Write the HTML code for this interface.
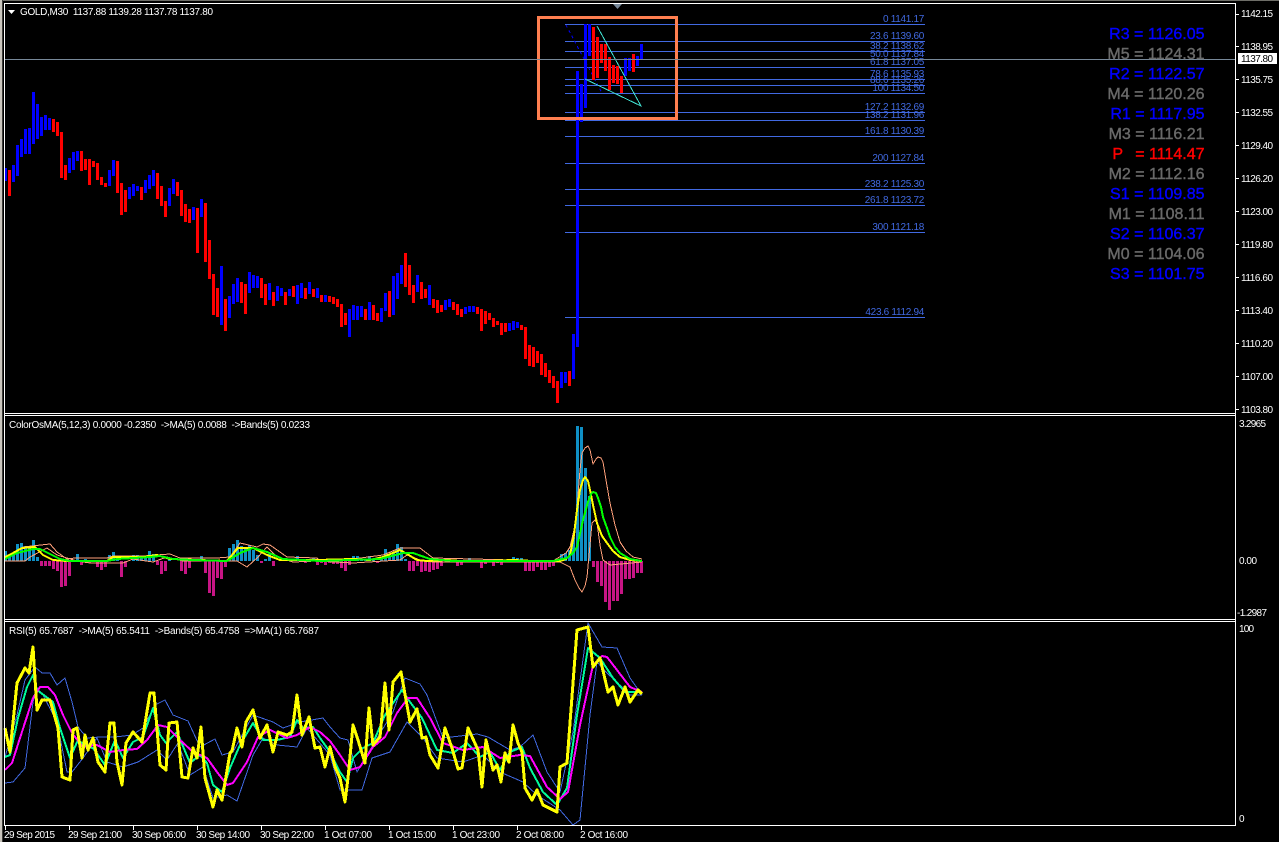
<!DOCTYPE html>
<html><head><meta charset="utf-8"><title>GOLD,M30</title>
<style>
html,body{margin:0;padding:0;background:#000;width:1279px;height:842px;overflow:hidden}
svg{display:block}
text{font-family:"Liberation Sans",sans-serif;font-size:10px;fill:#fff;white-space:pre}
.f{fill:#4169e1;text-anchor:end;letter-spacing:-.3px}
.p{font-size:16px;text-anchor:end;stroke-width:.4px}
.b{fill:#00f;stroke:#00f}.g{fill:#696969;stroke:#696969}.r{fill:#f00;stroke:#f00}
polyline{fill:none;shape-rendering:crispEdges;stroke-linejoin:round}
path{fill:none;shape-rendering:crispEdges}
</style></head><body>
<svg width="1279" height="842" viewBox="0 0 1279 842" xmlns="http://www.w3.org/2000/svg">
<rect width="1279" height="842" fill="#000"/>
<!-- window edge -->
<path d="M0 .5H1279" stroke="#6e6e68" stroke-width="1"/>
<path d="M1 0V842" stroke="#c8c4bc" stroke-width="2"/>
<path d="M2.5 0V842" stroke="#3c3c38" stroke-width="1"/>

<!-- fibo lines -->
<path d="M565 24.5H925M565 41.5H925M565 51.5H925M565 67.5H925M565 79.5H925M565 85.5H925M565 93.5H925M565 112.5H925M565 120.5H925M565 136.5H925M565 163.5H925M565 189.5H925M565 205.5H925M565 232.5H925M565 317.5H925" stroke="#4169e1" stroke-width="1"/>
<path d="M566 25L602 93" stroke="#0000ee" stroke-width="1" stroke-dasharray="3 3"/>
<text class="f" x="924" y="22">0 1141.17</text>
<text class="f" x="924" y="39">23.6 1139.60</text>
<text class="f" x="924" y="49">38.2 1138.62</text>
<text class="f" x="924" y="57">50.0 1137.84</text>
<text class="f" x="924" y="65">61.8 1137.05</text>
<text class="f" x="924" y="77">78.6 1135.93</text>
<text class="f" x="924" y="83">88.6 1135.26</text>
<text class="f" x="924" y="91">100 1134.50</text>
<text class="f" x="924" y="110">127.2 1132.69</text>
<text class="f" x="924" y="118">138.2 1131.96</text>
<text class="f" x="924" y="134">161.8 1130.39</text>
<text class="f" x="924" y="161">200 1127.84</text>
<text class="f" x="924" y="187">238.2 1125.30</text>
<text class="f" x="924" y="203">261.8 1123.72</text>
<text class="f" x="924" y="230">300 1121.18</text>
<text class="f" x="924" y="315">423.6 1112.94</text>

<!-- bars blue -->
<path stroke="#00f" stroke-width="3" d="M5.5 168V181M13.5 165V182M17.5 145V176M21.5 139V157M25.5 129V154M29.5 128V154M33.5 92V144M37.5 104V139M41.5 117V136M45.5 115V130M49.5 118V130M69.5 158V173M73.5 152V170M77.5 151V161M109.5 170V186M113.5 160V176M129.5 187V199M133.5 184V196M137.5 186V191M145.5 180V193M149.5 175V189M153.5 170V186M169.5 188V206M173.5 179V194M193.5 207V220M201.5 199V217M221.5 266V325M229.5 296V318M233.5 284V304M237.5 278V302M249.5 272V293M253.5 275V288M257.5 276V288M269.5 283V300M277.5 286V301M281.5 288V296M289.5 289V296M297.5 285V304M301.5 283V298M309.5 282V294M317.5 288V298M325.5 295V302M349.5 309V337M353.5 305V320M357.5 306V320M361.5 306V317M369.5 302V320M381.5 308V322M385.5 293V311M393.5 276V315M397.5 273V299M401.5 265V284M417.5 275V292M429.5 285V305M445.5 300V310M449.5 299V307M465.5 307V314M469.5 306V312M473.5 306V312M509.5 323V331M513.5 321V330M517.5 322V328M561.5 372V388M565.5 372V383M573.5 334V379M577.5 71V347M581.5 84V122M585.5 24V108M589.5 24V56M625.5 58V76M629.5 58V71M637.5 56V66M641.5 44V60"/>
<!-- bars red -->
<path stroke="#f00" stroke-width="3" d="M9.5 170V196M53.5 119V132M57.5 122V136M61.5 132V178M65.5 165V180M81.5 151V171M85.5 159V170M89.5 159V185M93.5 161V167M97.5 163V180M101.5 177V185M105.5 183V187M117.5 161V193M121.5 183V215M125.5 190V212M141.5 187V200M157.5 173V199M161.5 186V206M165.5 201V217M177.5 182V196M181.5 190V216M185.5 204V222M189.5 209V223M197.5 208V253M205.5 203V262M209.5 240V279M213.5 274V315M217.5 288V317M225.5 299V331M241.5 282V303M245.5 284V314M261.5 278V298M265.5 284V305M273.5 292V306M285.5 292V305M293.5 286V297M305.5 288V299M313.5 289V297M321.5 295V302M329.5 296V302M333.5 297V304M337.5 299V307M341.5 304V327M345.5 313V325M365.5 309V320M373.5 305V320M377.5 313V321M389.5 291V317M405.5 253V287M409.5 265V295M413.5 285V303M421.5 282V299M425.5 289V298M433.5 299V308M437.5 300V313M441.5 305V312M453.5 302V310M457.5 304V315M461.5 309V317M477.5 307V314M481.5 309V331M485.5 311V324M489.5 313V320M493.5 318V327M497.5 321V325M501.5 323V335M505.5 323V332M521.5 325V330M525.5 327V359M529.5 345V366M533.5 347V367M537.5 351V363M541.5 354V375M545.5 363V377M549.5 370V383M553.5 376V388M557.5 381V403M569.5 371V386M593.5 27V80M597.5 37V78M601.5 44V63M605.5 44V71M609.5 57V90M613.5 65V83M617.5 66V84M621.5 76V93M633.5 54V72"/>
<path d="M597 26L641 106L585 79" stroke="#40e0d0" stroke-width="1"/>
<rect x="538.5" y="17.5" width="138" height="101" fill="none" stroke="#ff7f50" stroke-width="3"/>
<polygon points="613,4 622,4 617.5,9" fill="#778899"/>

<!-- current price line -->
<path d="M5 59.5H1235" stroke="#778899" stroke-width="1"/>

<!-- pivots -->
<text class="p b" x="1204.5" y="39">R3 = 1126.05</text>
<text class="p g" x="1204.5" y="59">M5 = 1124.31</text>
<text class="p b" x="1204.5" y="79">R2 = 1122.57</text>
<text class="p g" x="1204.5" y="99">M4 = 1120.26</text>
<text class="p b" x="1204.5" y="119">R1 = 1117.95</text>
<text class="p g" x="1204.5" y="139">M3 = 1116.21</text>
<text class="p r" x="1123" y="159">P</text><text class="p r" x="1204.5" y="159">= 1114.47</text>
<text class="p g" x="1204.5" y="179">M2 = 1112.16</text>
<text class="p b" x="1204.5" y="199">S1 = 1109.85</text>
<text class="p g" x="1204.5" y="219">M1 = 1108.11</text>
<text class="p b" x="1204.5" y="239">S2 = 1106.37</text>
<text class="p g" x="1204.5" y="259">M0 = 1104.06</text>
<text class="p b" x="1204.5" y="279">S3 = 1101.75</text>

<!-- OsMA histogram -->
<path stroke="#0f8fc5" stroke-width="3" d="M5.5 551V561M9.5 555V561M13.5 555V561M17.5 544V561M21.5 543V561M25.5 546V561M29.5 547V561M33.5 540V561M37.5 557V561M77.5 554V561M85.5 559V561M109.5 555V561M113.5 552V561M117.5 557V561M133.5 555V561M137.5 555V561M141.5 557V561M145.5 557V561M149.5 551V561M153.5 554V561M169.5 559V561M201.5 556V561M229.5 548V561M233.5 544V561M237.5 540V561M241.5 546V561M245.5 547V561M249.5 545V561M253.5 550V561M257.5 555V561M265.5 559V561M269.5 554V561M281.5 559V561M289.5 559V561M293.5 559V561M297.5 556V561M313.5 558V561M353.5 556V561M357.5 556V561M361.5 559V561M365.5 559V561M369.5 556V561M373.5 559V561M381.5 557V561M385.5 549V561M389.5 556V561M393.5 552V561M397.5 544V561M401.5 547V561M405.5 559V561M445.5 559V561M469.5 558V561M513.5 557V561M517.5 558V561M521.5 558V561M561.5 554V561M565.5 553V561M569.5 550V561M573.5 537V561M577.5 426V561M581.5 427V561M585.5 468V561M589.5 496V561"/>
<path stroke="#c71585" stroke-width="3" d="M41.5 561V566M45.5 561V566M49.5 561V566M53.5 561V569M57.5 561V571M61.5 561V587M65.5 561V586M69.5 561V576M81.5 561V565M89.5 561V563M97.5 561V567M101.5 561V570M105.5 561V567M121.5 561V577M125.5 561V567M157.5 561V565M161.5 561V574M165.5 561V571M181.5 561V571M185.5 561V574M189.5 561V568M205.5 561V573M209.5 561V593M213.5 561V596M217.5 561V578M221.5 561V579M225.5 561V567M261.5 561V563M273.5 561V566M305.5 561V563M317.5 561V565M321.5 561V563M325.5 561V565M329.5 561V563M333.5 561V564M337.5 561V564M341.5 561V568M345.5 561V571M349.5 561V565M377.5 561V563M409.5 561V571M413.5 561V571M417.5 561V566M421.5 561V572M425.5 561V571M429.5 561V572M433.5 561V570M437.5 561V569M441.5 561V566M457.5 561V566M461.5 561V565M481.5 561V568M485.5 561V564M493.5 561V566M497.5 561V563M501.5 561V565M525.5 561V571M529.5 561V571M533.5 561V571M537.5 561V567M541.5 561V570M545.5 561V570M549.5 561V567M553.5 561V566M593.5 561V567M597.5 561V582M601.5 561V586M605.5 561V602M609.5 561V610M613.5 561V601M617.5 561V601M621.5 561V594M625.5 561V579M629.5 561V579M633.5 561V578M637.5 561V573M641.5 561V573"/>
<!-- OsMA lines -->
<polyline stroke="#ffa07a" stroke-width="1" points="5,558 13,553 23,547 50,544 57,552 67,559 75,558 107,558 113,556 143,556 170,554 180,558 217,558 230,557 240,543 257,547 263,544 270,545 287,557 317,558 320,561 353,559 383,555 400,548 420,548 433,558 553,561 566,553 570,547 574,530 577,507 580,470 582,453 585,448 588,446 590,450 593,464 596,459 598,457 601,458 603,462 606,480 610,503 615,525 620,542 626,551 633,557 642,559"/>
<polyline stroke="#ffa07a" stroke-width="1" points="5,561 25,561 30,557 47,548 57,555 77,561 90,563 123,563 133,559 153,562 167,557 183,561 237,561 247,567 258,557 267,547 277,557 293,562 317,561 353,563 400,560 407,555 420,560 433,562 560,562 570,567 575,580 579,588 582,592 585,586 587,577 590,545 592,523 595,520 597,523 600,545 603,560 610,565 642,562"/>
<polyline stroke="#ff0" stroke-width="2" points="5,557 13,553 22,548 35,547 43,555 53,560 67,561 107,561 113,557 143,557 157,555 170,559 227,561 238,548 253,548 267,555 280,560 317,560 353,559 370,560 383,557 400,550 407,554 417,560 427,561 447,560 460,561 487,561 513,560 533,561 560,561 566,559 570,555 574,535 577,510 580,490 583,480 585,477 588,481 590,490 593,505 597,523 602,536 607,543 613,551 620,557 630,560 642,561"/>
<polyline stroke="#0f0" stroke-width="2" points="5,559 17,553 33,549 40,549 60,559 70,561 107,561 117,559 150,557 160,556 173,559 193,560 227,561 240,553 253,548 267,552 283,559 320,561 380,559 403,553 413,553 430,559 453,561 553,561 567,558 573,553 577,547 583,520 588,502 591,494 593,492 596,493 598,498 601,507 603,517 607,528 610,537 615,547 620,553 630,559 642,561"/>

<!-- RSI lines -->
<polyline stroke="#4169e1" stroke-width="1" points="5,757 17,715 25,680 35,667 42,673 50,673 57,685 65,678 72,702 78,727 87,738 100,737 115,737 132,735 143,728 155,705 165,700 173,715 188,721 200,747 215,739 222,755 233,752 253,715 273,722 283,728 300,722 323,718 330,727 340,738 348,740 357,772 373,745 393,712 405,678 420,684 427,695 443,738 477,734 488,737 510,750 520,747 533,735 547,772 560,792 573,732 588,623 602,647 617,648 630,678 642,695"/>
<polyline stroke="#4169e1" stroke-width="1" points="5,783 13,782 25,768 33,702 37,688 43,695 57,722 67,772 72,772 83,758 97,738 107,762 123,767 138,762 157,750 167,760 178,743 190,775 203,767 213,798 227,795 237,801 253,755 263,738 277,745 297,747 307,728 330,755 340,790 350,790 362,790 372,758 390,752 407,722 423,738 437,758 463,762 483,755 500,772 523,782 537,795 560,810 573,825 580,820 590,715 597,662 607,673 623,688 630,695 642,695"/>
<polyline stroke="#00fa9a" stroke-width="2" points="5,757 10,755 18,718 27,687 33,675 37,690 53,702 60,728 70,758 78,740 87,747 93,748 105,765 115,740 123,758 133,742 143,737 153,708 160,735 166,743 177,732 190,763 200,755 207,763 213,785 222,792 230,768 240,745 253,723 263,740 277,740 290,737 297,720 303,728 313,727 320,738 330,752 340,772 347,782 353,758 363,748 373,743 385,715 402,690 410,702 422,718 437,750 453,753 467,743 480,757 490,752 500,770 510,752 522,747 530,768 543,792 557,805 567,788 577,715 588,648 600,658 613,678 625,692 642,692"/>
<polyline stroke="#f0f" stroke-width="2" points="5,770 12,763 20,738 33,698 40,687 48,687 55,695 63,715 72,733 83,747 97,745 110,752 123,750 137,749 147,740 158,725 167,727 180,740 193,752 207,758 217,772 227,785 233,783 247,762 258,737 270,730 287,738 297,735 310,727 320,732 330,741 340,755 350,770 360,767 373,747 385,737 397,713 408,698 417,698 430,718 443,743 463,750 483,747 500,758 520,755 530,756 547,787 560,799 568,792 580,725 593,665 602,656 607,657 617,670 630,687 642,692"/>
<polyline stroke="#ff0" stroke-width="3" points="5,728 10,752 17,683 25,668 29,673 33,647 37,710 42,700 50,700 58,728 62,777 70,780 73,730 77,728 82,758 85,735 88,750 93,738 98,762 105,772 110,723 114,723 117,762 122,785 126,743 133,732 142,742 150,693 154,693 160,765 166,770 169,723 177,722 182,777 188,778 193,748 197,758 201,727 205,778 213,807 217,790 222,800 230,753 232,751 237,728 242,747 246,722 253,710 260,738 267,725 273,752 278,732 287,735 292,732 297,695 302,735 309,717 315,748 320,747 325,767 330,747 335,767 340,778 345,802 348,778 353,725 358,740 365,763 369,708 373,745 380,737 385,683 389,730 393,682 401,672 410,722 417,709 422,738 426,737 430,755 438,768 445,728 452,748 458,769 462,768 468,728 478,750 482,787 486,740 493,770 497,765 501,782 505,753 509,762 513,725 518,743 522,752 525,788 532,800 537,790 543,805 557,812 560,767 567,763 577,630 588,627 593,667 600,658 608,692 613,687 618,705 625,687 630,702 638,690 642,694"/>

<!-- frame -->
<path stroke="#fff" stroke-width="1" d="M4 3.5H1236M4.5 3V826M1235.5 3V826M4 413.5H1236M4 415.5H1236M4 619.5H1236M4 621.5H1236M4 825.5H1236"/>
<path stroke="#fff" stroke-width="1" d="M1236 14.5H1239M1236 46.5H1239M1236 79.5H1239M1236 112.5H1239M1236 145.5H1239M1236 178.5H1239M1236 211.5H1239M1236 244.5H1239M1236 277.5H1239M1236 310.5H1239M1236 343.5H1239M1236 376.5H1239M1236 409.5H1239M5.5 826V830M69.5 826V830M133.5 826V830M197.5 826V830M261.5 826V830M325.5 826V830M389.5 826V830M453.5 826V830M517.5 826V830M581.5 826V830"/>

<!-- titles -->
<polygon points="8,10 15,10 11.5,14" fill="#fff"/>
<text x="20" y="15" textLength="193" lengthAdjust="spacing">GOLD,M30  1137.88 1139.28 1137.78 1137.80</text>
<text x="9" y="428" textLength="301" lengthAdjust="spacing">ColorOsMA(5,12,3) 0.0000 -0.2350  -&gt;MA(5) 0.0088  -&gt;Bands(5) 0.0233</text>
<text x="9" y="634" textLength="310" lengthAdjust="spacing">RSI(5) 65.7687  -&gt;MA(5) 65.5411  -&gt;Bands(5) 65.4758  =&gt;MA(1) 65.7687</text>

<!-- price axis -->
<text x="1241" y="17" textLength="32">1142.15</text>
<text x="1241" y="50" textLength="32">1138.95</text>
<text x="1241" y="83" textLength="32">1135.75</text>
<text x="1241" y="116" textLength="32">1132.55</text>
<text x="1241" y="149" textLength="32">1129.40</text>
<text x="1241" y="182" textLength="32">1126.20</text>
<text x="1241" y="215" textLength="32">1123.00</text>
<text x="1241" y="248" textLength="32">1119.80</text>
<text x="1241" y="281" textLength="32">1116.60</text>
<text x="1241" y="314" textLength="32">1113.40</text>
<text x="1241" y="347" textLength="32">1110.20</text>
<text x="1241" y="380" textLength="32">1107.00</text>
<text x="1241" y="413" textLength="32">1103.80</text>
<rect x="1238" y="53" width="39" height="11" fill="#fff"/>
<text x="1241" y="62" textLength="32" style="fill:#000">1137.80</text>
<text x="1239" y="427" textLength="27">3.2965</text>
<text x="1239" y="564" textLength="18">0.00</text>
<text x="1237" y="616" textLength="30">-1.2987</text>
<text x="1239" y="632" textLength="15">100</text>
<text x="1239" y="822">0</text>

<!-- time axis -->
<text x="4" y="838" textLength="51">29 Sep 2015</text>
<text x="68" y="838" textLength="54">29 Sep 21:00</text>
<text x="132" y="838" textLength="54">30 Sep 06:00</text>
<text x="196" y="838" textLength="54">30 Sep 14:00</text>
<text x="260" y="838" textLength="54">30 Sep 22:00</text>
<text x="324" y="838" textLength="48">1 Oct 07:00</text>
<text x="388" y="838" textLength="48">1 Oct 15:00</text>
<text x="452" y="838" textLength="48">1 Oct 23:00</text>
<text x="516" y="838" textLength="48">2 Oct 08:00</text>
<text x="580" y="838" textLength="48">2 Oct 16:00</text>
</svg>
</body></html>
